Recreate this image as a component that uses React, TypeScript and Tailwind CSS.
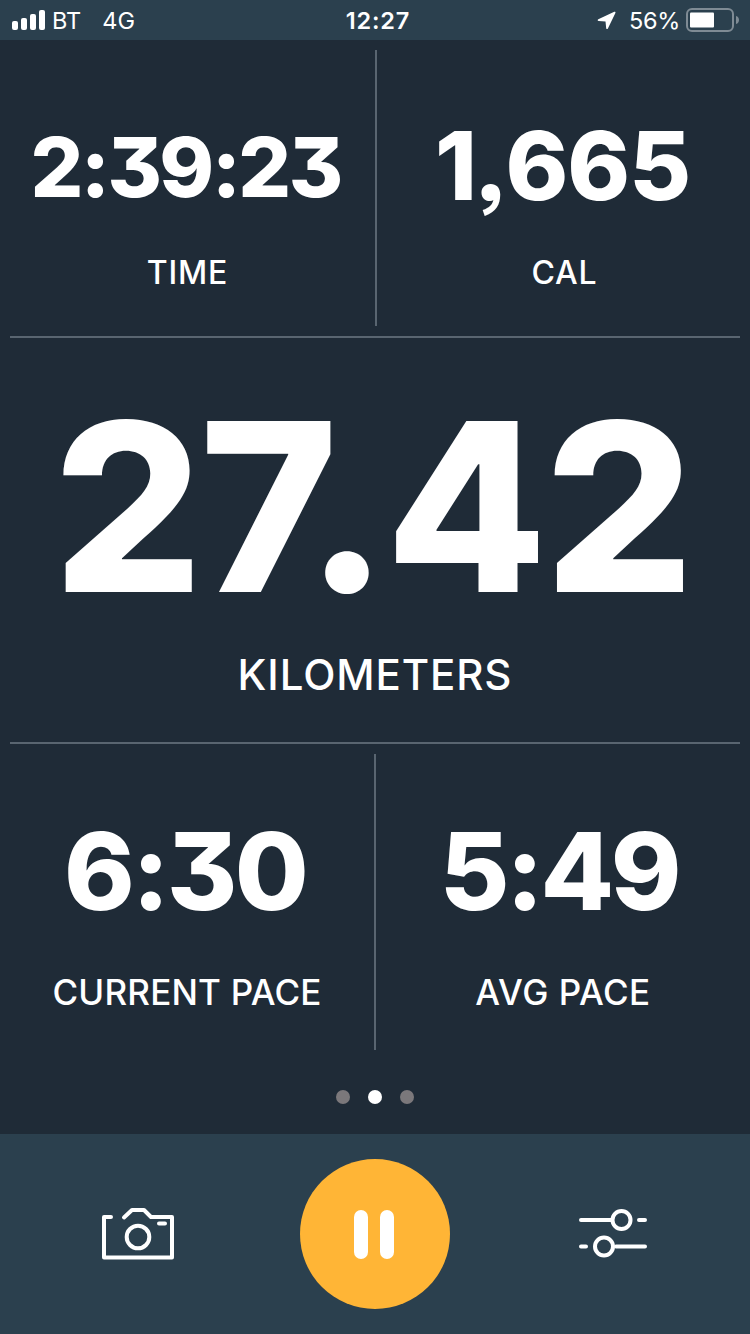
import clsx from "clsx";

type StatProps = {
  value: string;
  label: string;
  className?: string;
  valueClass: string;
  labelClass: string;
};

function Stat({ value, label, className, valueClass, labelClass }: StatProps) {
  return (
    <div className={clsx("flex flex-col items-center", className)}>
      <div
        className={clsx(
          "flex items-center justify-center font-extrabold leading-none whitespace-nowrap [font-feature-settings:'calt'_0,'ss03','cv09']",
          valueClass
        )}
      >
        {value}
      </div>
      <div
        className={clsx(
          "font-medium leading-none whitespace-nowrap",
          labelClass
        )}
      >
        {label}
      </div>
    </div>
  );
}

function StatusBar() {
  return (
    <header className="grid h-10 grid-cols-3 items-center bg-[#2b404e] text-[23.5px] leading-none">
      <div className="flex items-center pl-3">
        <svg width="33" height="20" viewBox="0 0 33 20" fill="currentColor">
          <rect x="0" y="11" width="6" height="9" rx="2" />
          <rect x="9" y="8" width="6" height="12" rx="2" />
          <rect x="18" y="4" width="6" height="16" rx="2" />
          <rect x="27" y="0" width="6" height="20" rx="2" />
        </svg>
        <span className="ml-[7px] pt-0.5">BT</span>
        <span className="ml-[21px] pt-0.5">4G</span>
      </div>
      <div className="pt-0.5 pl-1.5 text-center font-semibold tracking-[0.8px]">
        12:27
      </div>
      <div className="flex items-center justify-end pr-2.5">
        <svg width="20" height="20" viewBox="0 0 20 20" fill="currentColor">
          <path d="M17.3 1.8 1.3 9.2c-1 .5-.8 1.6.3 1.7l6.9.6.7 6.7c.1 1.1 1.3 1.2 1.7.2l7.5-15.3c.4-.9-.2-1.6-1.1-1.3Z" />
        </svg>
        <span className="ml-3 pt-0.5 tracking-[-0.3px]">56%</span>
        <svg className="ml-1.5" width="54" height="24" viewBox="0 0 54 24">
          <rect
            x="1"
            y="1"
            width="46"
            height="22"
            rx="5"
            fill="none"
            stroke="#7f8b94"
            strokeWidth="2"
          />
          <rect x="4" y="4.5" width="24" height="15" rx="1" fill="white" />
          <path d="M50 8c4 1 4 7 0 8Z" fill="#7f8b94" />
        </svg>
      </div>
    </header>
  );
}

function CameraIcon() {
  return (
    <svg
      width="76"
      height="56"
      viewBox="0 0 76 56"
      fill="none"
      stroke="currentColor"
      strokeWidth="4"
      strokeLinecap="round"
      strokeLinejoin="round"
    >
      <path d="M11 11H4v40.5h68V11H51l-7-7H32l-8 7.5" />
      <circle cx="38" cy="31" r="11.3" />
      <path d="M59 17.5h6" />
    </svg>
  );
}

function SlidersIcon() {
  return (
    <svg
      width="76"
      height="52"
      viewBox="-4 1 76 52"
      fill="none"
      stroke="currentColor"
      strokeWidth="4"
      strokeLinecap="round"
    >
      <path d="M3 13h31M61 13h6M3 39.5h5M38 39.5h29" />
      <circle cx="43.5" cy="13" r="9" />
      <circle cx="26" cy="39.5" r="9" />
    </svg>
  );
}

function App() {
  return (
    <div className="flex h-[1334px] w-[750px] flex-col bg-[#1f2b37] font-['Inter',sans-serif] text-white">
      <StatusBar />
      <main className="flex flex-1 flex-col">
        <section className="flex h-[296px]">
          <Stat
            value="2:39:23"
            label="TIME"
            className="w-[375px] pt-[77px]"
            valueClass="h-[100px] pr-1 text-[83px] tracking-[-2.6px]"
            labelClass="mt-10 text-[32px] tracking-[0.8px]"
          />
          <div className="mt-2.5 h-[276px] w-0.5 bg-[#596570]" />
          <Stat
            value="1,665"
            label="CAL"
            className="flex-1 pt-[75px]"
            valueClass="h-[100px] pr-0.5 text-[95px] tracking-[-1px]"
            labelClass="mt-[42px] pl-0.5 text-[32px] tracking-[0.8px]"
          />
        </section>
        <div className="mx-2.5 h-0.5 bg-[#596570]" />
        <Stat
          value="27.42"
          label="KILOMETERS"
          className="h-[404px] pt-[48px]"
          valueClass="h-[240px] pr-1.5 text-[235px] tracking-[-3px]"
          labelClass="mt-[28px] text-[42px] tracking-[0.9px]"
        />
        <div className="mx-2.5 h-0.5 bg-[#596570]" />
        <section className="flex h-[306px]">
          <Stat
            value="6:30"
            label="CURRENT PACE"
            className="w-[374px] pt-[77px]"
            valueClass="h-[100px] pr-1 text-[107px] tracking-[-2.7px]"
            labelClass="mt-[54px] text-[35px] tracking-[0.2px]"
          />
          <div className="mt-2.5 h-[296px] w-0.5 bg-[#596570]" />
          <Stat
            value="5:49"
            label="AVG PACE"
            className="flex-1 pt-[77px]"
            valueClass="h-[100px] pr-2 text-[107px] tracking-[-3.3px]"
            labelClass="mt-[54px] text-[35px] tracking-[0.5px]"
          />
        </section>
        <div className="mt-10 flex justify-center gap-[18px]">
          <span className="size-3.5 rounded-full bg-[#7b787b]" />
          <span className="size-3.5 rounded-full bg-white" />
          <span className="size-3.5 rounded-full bg-[#7b787b]" />
        </div>
      </main>
      <footer className="flex h-[200px] items-center justify-between bg-[#2b404e] px-[100px]">
        <button>
          <CameraIcon />
        </button>
        <button className="flex size-[150px] items-center justify-center gap-3 rounded-full bg-[#ffb536] pr-0.5">
          <span className="h-[49px] w-3.5 rounded-full bg-white" />
          <span className="h-[49px] w-3.5 rounded-full bg-white" />
        </button>
        <button>
          <SlidersIcon />
        </button>
      </footer>
    </div>
  );
}

export default App;
